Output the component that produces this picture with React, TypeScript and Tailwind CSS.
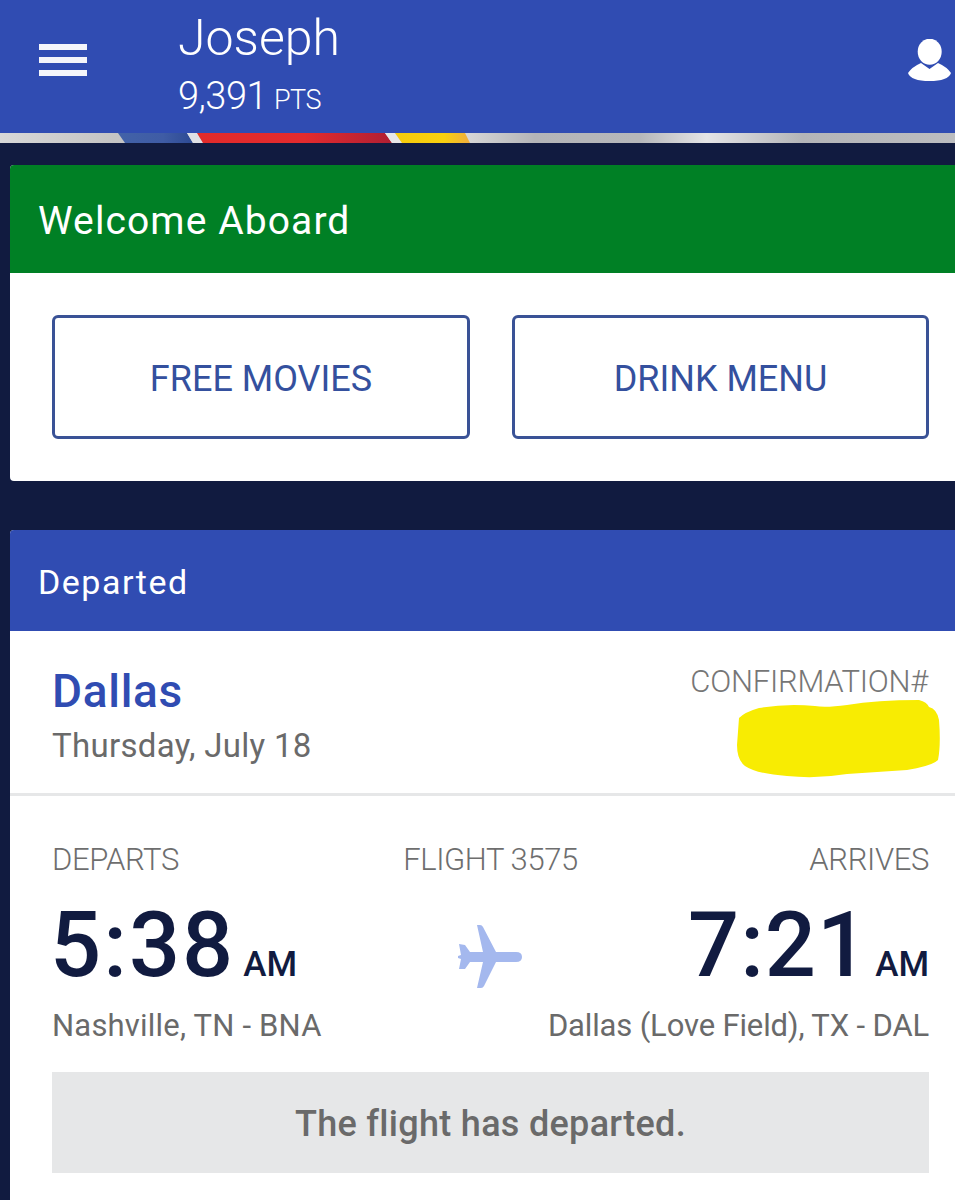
function Stripe() {
  return (
    <svg className="block w-full h-[10px]" viewBox="0 0 955 10" preserveAspectRatio="none">
      <defs>
        <linearGradient id="silver" x1="0" x2="955" gradientUnits="userSpaceOnUse" y1="0" y2="0">
          <stop offset="0" stopColor="#d8d8d8" />
          <stop offset="0.12" stopColor="#c4c4c4" />
          <stop offset="0.49" stopColor="#d6d6d6" />
          <stop offset="0.56" stopColor="#b4b5b8" />
          <stop offset="0.67" stopColor="#b6b7ba" />
          <stop offset="0.74" stopColor="#e4e4e6" />
          <stop offset="0.84" stopColor="#b4b5b8" />
          <stop offset="1" stopColor="#bcbdc0" />
        </linearGradient>
        <linearGradient id="blue" x1="118" x2="193" gradientUnits="userSpaceOnUse" y1="0" y2="0">
          <stop offset="0" stopColor="#4262a8" />
          <stop offset="0.6" stopColor="#3f5ca5" />
          <stop offset="1" stopColor="#2d4a94" />
        </linearGradient>
        <linearGradient id="red" x1="197" x2="392" gradientUnits="userSpaceOnUse" y1="0" y2="0">
          <stop offset="0" stopColor="#e12b2b" />
          <stop offset="0.55" stopColor="#e32b2e" />
          <stop offset="1" stopColor="#b01f33" />
        </linearGradient>
        <linearGradient id="yellow" x1="395" x2="470" gradientUnits="userSpaceOnUse" y1="0" y2="0">
          <stop offset="0" stopColor="#f5cb0c" />
          <stop offset="0.65" stopColor="#f8d00f" />
          <stop offset="1" stopColor="#f0ad3e" />
        </linearGradient>
      </defs>
      <rect width="955" height="10" fill="url(#silver)" />
      <polygon points="118,0 187,0 193,10 125,10" fill="url(#blue)" />
      <polygon points="187,0 197,0 203,10 193,10" fill="#dfe0e6" />
      <polygon points="197,0 385,0 392,10 203,10" fill="url(#red)" />
      <polygon points="385,0 395,0 402,10 392,10" fill="#e6e6e8" />
      <polygon points="395,0 465,0 470,10 402,10" fill="url(#yellow)" />
    </svg>
  );
}

function Plane() {
  return (
    <svg className="w-[65px] h-[64px]" viewBox="0 0 65 64">
      <path
        fill="#a4b8ee"
        d="M64 32Q64 27 58 27L38 27L25 2Q24 0 22 0L19 0L25 27L12 27L7 20L1 19L3 30L0 31L0 33L3 34L1 44L7 44L12 37L25 37L19 63L23 63Q25 63 26 61L38 37L58 37Q64 37 64 32Z"
      />
    </svg>
  );
}

export default function App() {
  return (
    <div
      className="h-[1200px] overflow-hidden bg-[#111b40]"
      style={{ fontFamily: 'Roboto, sans-serif' }}
    >
      <header className="h-[133px] bg-[#304cb2] flex text-white relative">
        <div className="ml-[39px] mt-[44px] w-[48px] flex flex-col gap-[7px]">
          <div className="h-[6px] bg-[#f4f5fa]" />
          <div className="h-[6px] bg-[#f4f5fa]" />
          <div className="h-[6px] bg-[#f4f5fa]" />
        </div>
        <div className="ml-[91px] pt-[4px]">
          <div className="text-[50px] leading-[68px] font-light">Joseph</div>
          <div className="text-[38px] leading-[48px] font-light tracking-[-0.5px]">
            9,391{" "}
            <span className="text-[27px] tracking-[-0.4px] -ml-[2px]">PTS</span>
          </div>
        </div>
        <svg className="absolute left-[908px] top-[39px] w-[44px] h-[42px]" viewBox="0 0 44 42">
          <ellipse cx="21.7" cy="12.7" rx="12" ry="13" fill="#fff" />
          <path fill="#fff" d="M0 34Q4 28 13 24L21.5 30L30 24Q39 28 43 34Q40 42 21.5 42Q3 42 0 34Z" />
        </svg>
      </header>
      <Stripe />

      <section className="ml-[10px] mt-[22px] bg-white rounded-l-[4px] overflow-hidden">
        <h2 className="h-[108px] bg-[#008025] text-white text-[39px] leading-[112px] pl-[28px] tracking-[1.1px]">
          Welcome Aboard
        </h2>
        <div className="h-[208px] flex gap-[42px] pl-[42px] pt-[42px]">
          <button className="w-[418px] h-[124px] pt-[3px] border-[3px] border-[#3a5296] rounded-[6px] text-[#34509e] text-[36px]">
            FREE MOVIES
          </button>
          <button className="w-[417px] h-[124px] pt-[3px] border-[3px] border-[#3a5296] rounded-[6px] text-[#34509e] text-[36px]">
            DRINK MENU
          </button>
        </div>
      </section>

      <section className="ml-[10px] mt-[49px] pb-[60px] bg-white rounded-l-[4px] overflow-hidden">
        <h2 className="h-[101px] bg-[#304cb2] text-white text-[34px] leading-[104px] pl-[28px] tracking-[1.5px]">Departed</h2>

        <div className="relative h-[165px] border-b-[3px] border-[#e6e7e8] flex justify-between pl-[43px] pr-[27px]">
          <div className="pt-[30px]">
            <div className="text-[46px] leading-[60px] font-medium text-[#304cb2] tracking-[0.7px] -ml-[1px]">Dallas</div>
            <div className="text-[33px] leading-[46px] mt-[2px] text-[#6a6a6a] tracking-[0.3px] -ml-[1px]">Thursday, July 18</div>
          </div>
          <div className="pt-[30px] text-[31px] leading-[42px] text-[#767676] font-light tracking-[-0.25px]">CONFIRMATION#</div>
          <svg className="absolute left-[727px] top-[69px] w-[203px] h-[78px]" viewBox="0 0 203 78">
            <path
              fill="#f8ec02"
              d="M2 18Q8 12 22 8Q50 3 78 6Q88 8 110 5Q140 0 182 0Q190 2 192 7Q200 9 202 20Q204 45 201 60Q195 66 170 70Q140 72 110 74Q80 79 50 76Q20 74 8 66Q0 60 0 45Z"
            />
          </svg>
        </div>

        <div className="pl-[42px] pr-[26px] pt-[43px] grid grid-cols-[minmax(0,1fr)_auto_minmax(0,1fr)]">
          <div>
            <div className="text-[31px] leading-[42px] text-[#6e6e6e] font-light tracking-[-0.35px]">DEPARTS</div>
            <div className="flex items-baseline text-[#111b40] mt-[21px] h-[88px]">
              <span className="text-[90px] leading-[88px] font-medium tracking-[2px] -ml-[2px]">5:38</span>
              <span className="text-[35px] font-medium ml-[8px]">AM</span>
            </div>
            <div className="text-[31px] leading-[42px] text-[#6a6a6a] mt-[15px] tracking-[0.2px] whitespace-nowrap">Nashville, TN - BNA</div>
          </div>
          <div className="flex flex-col items-center">
            <div className="text-[31px] leading-[42px] text-[#6e6e6e] font-light tracking-[-0.4px]">FLIGHT 3575</div>
            <div className="mt-[44px]">
              <Plane />
            </div>
          </div>
          <div className="flex flex-col items-end">
            <div className="text-[31px] leading-[42px] text-[#6e6e6e] font-light tracking-[-0.35px]">ARRIVES</div>
            <div className="flex items-baseline text-[#111b40] mt-[21px] h-[88px]">
              <span className="text-[90px] leading-[88px] font-medium tracking-[1px]">7:21</span>
              <span className="text-[35px] font-medium ml-[6px]">AM</span>
            </div>
            <div className="text-[31px] leading-[42px] text-[#6a6a6a] mt-[15px] tracking-[-0.15px] whitespace-nowrap">Dallas (Love Field), TX - DAL</div>
          </div>
        </div>

        <div className="ml-[42px] mr-[26px] mt-[25px] h-[101px] pt-[3px] bg-[#e6e7e8] flex items-center justify-center text-[36px] font-medium text-[#6a6a6a] tracking-[0.3px]">
          The flight has departed.
        </div>
      </section>
    </div>
  );
}
